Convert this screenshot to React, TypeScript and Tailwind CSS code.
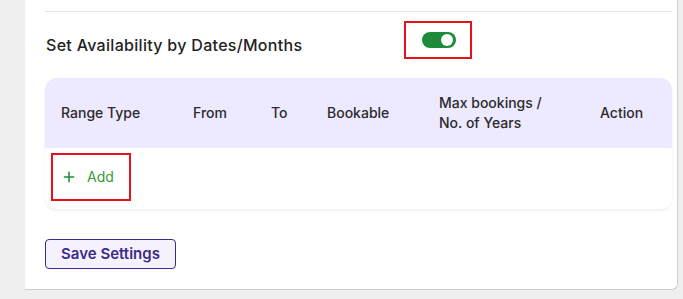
import { Plus } from "lucide-react";

const columns = [
  { label: "Range Type", width: "w-[132px]" },
  { label: "From", width: "w-[78px]" },
  { label: "To", width: "w-[56px]" },
  { label: "Bookable", width: "w-[112px]" },
  { label: "Max bookings / No. of Years", width: "w-[161px]" },
  { label: "Action", width: "flex-1" },
];

const App = () => {
  return (
    <div className="min-h-[299px] bg-[#efefef] font-['Inter',sans-serif]">
      <div className="pl-[25px]">
        <div className="w-[653px] h-[290px] bg-white border-r border-b border-[#cfcfcf] rounded-br-md pl-5 pr-[5px] pt-[11px]">
          {/* divider */}
          <div className="h-px bg-[#e4e4e7]" />

          {/* availability toggle */}
          <div className="flex items-center mt-[9px] h-[38px]">
            <span className="w-[359px] pl-px pt-[9px] text-[16px] font-medium text-[#222] tracking-[0.3px]">
              Set Availability by Dates/Months
            </span>
            <div className="w-[68px] h-[38px] border-2 border-[#e8101a] flex items-center pl-4">
              <button className="w-[34px] h-4 rounded-full bg-[#1e8b3a] flex items-center justify-end pr-[3px]">
                <span className="w-3 h-3 rounded-full bg-white" />
              </button>
            </div>
          </div>

          {/* table */}
          <div className="mt-[19px] rounded-xl bg-white shadow-[0_2px_3px_rgba(0,0,0,0.06)]">
            <div className="flex items-center h-[70px] pl-4 bg-[#ede9fe] rounded-t-xl text-sm font-medium text-[#2b2b2b]">
              {columns.map((col) => (
                <div key={col.label} className={`${col.width} leading-[20px]`}>
                  {col.label === "Max bookings / No. of Years" ? (
                    <>
                      Max bookings /
                      <br />
                      No. of Years
                    </>
                  ) : (
                    col.label
                  )}
                </div>
              ))}
            </div>
            <div className="h-[61px] pt-[5px] pl-[6px]">
              <button className="w-[80px] h-[48px] border-2 border-[#e8101a] flex items-center pl-2 text-sm text-[#3a9a3a]">
                <Plus className="w-4 h-4 text-[#1e8b3a]" strokeWidth={2.2} />
                <span className="ml-[10px]">Add</span>
              </button>
            </div>
          </div>

          {/* save */}
          <button className="mt-[30px] w-[131px] h-[30px] rounded border border-[#3f2a8c] bg-[#f5f2fe] text-[15px] font-semibold text-[#3b2a8a]">
            Save Settings
          </button>
        </div>
      </div>
    </div>
  );
};

export default App;
